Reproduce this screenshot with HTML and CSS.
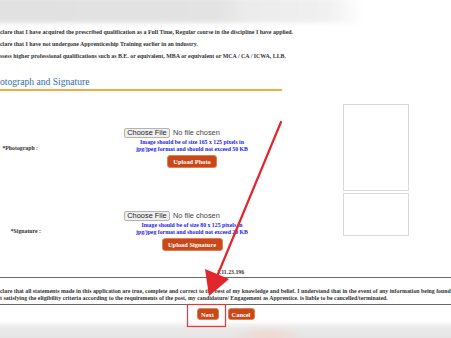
FILE: index.html
```html
<!DOCTYPE html>
<html lang="en">
<head>
  <meta charset="UTF-8">
  <meta name="viewport" content="width=device-width, initial-scale=1.0">
  <title>Apprentice Registration - Photograph and Signature</title>
  <link rel="stylesheet" href="styles.css">
</head>
<body>
  <div class="band band--top"></div>

  <ul class="decl__list">
    <li>clare that I have acquired the prescribed qualification as a Full Time, Regular course in the discipline I have applied.</li>
    <li>clare that I have not undergone Apprenticeship Training earlier in an industry.</li>
    <li>ssess higher professional qualifications such as B.E. or equivalent, MBA or equivalent or MCA / CA / ICWA, LLB.</li>
  </ul>

  <h2 class="section__title">otograph and Signature</h2>

  <div class="upload__wrap">
    <div class="upload__row upload__row--photo">
      <div class="upload__label">*Photograph :</div>
      <div class="upload__field">
        <div class="file">
          <span class="file__btn">Choose File</span>
          <span class="file__name">No file chosen</span>
        </div>
        <p class="upload__hint">Image should be of size 165 x 125 pixels in<br>jpg/jpeg format and should not exceed 50 KB</p>
        <button class="btn">Upload Photo</button>
      </div>
      <div class="preview preview--photo"></div>
    </div>

    <div class="upload__row upload__row--sign">
      <div class="upload__label">*Signature :</div>
      <div class="upload__field">
        <div class="file">
          <span class="file__btn">Choose File</span>
          <span class="file__name">No file chosen</span>
        </div>
        <p class="upload__hint">Image should be of size 80 x 125 pixels in<br>jpg/jpeg format and should not exceed 20 KB</p>
        <button class="btn">Upload Signature</button>
      </div>
      <div class="preview preview--sign"></div>
    </div>
  </div>

  <div class="version">1.11.23.196</div>

  <div class="declare">
    <p>clare that all statements made in this application are true, complete and correct to the best of my knowledge and belief. I understand that in the event of any information being found</p>
    <p>t satisfying the eligibility criteria according to the requirements of the post, my candidature/ Engagement as Apprentice. is liable to be cancelled/terminated.</p>
  </div>

  <div class="actions">
    <button class="btn btn--lg">Next</button>
    <button class="btn btn--lg">Cancel</button>
  </div>

  <div class="band band--bottom"></div>

  <!-- annotation drawn over the screenshot -->
  <svg class="annot" width="451" height="338" viewBox="0 0 451 338">
    <line x1="281" y1="122" x2="218" y2="274" stroke="#e3262b" stroke-width="2.2" stroke-linecap="round"/>
    <polygon points="205,269 229,279 209,296" fill="#e3262b"/>
    <rect x="187.5" y="304.5" width="38" height="22" fill="none" stroke="#e4393c" stroke-width="1.2"/>
  </svg>
</body>
</html>
```

FILE: styles.css
```css
* {
  margin: 0;
  padding: 0;
  box-sizing: border-box;
}

ul,
ol {
  list-style: none;
}

body {
  position: relative;
  width: 451px;
  height: 338px;
  overflow: hidden;
  background: #fff;
  font-family: "Liberation Serif", "Times New Roman", serif;
  color: #333;
}

.band {
  filter: blur(2px);
}

.band--top {
  height: 25px;
  margin: -2px -4px 0;
  background: linear-gradient(to right, #e1e1e1 0, #e3e3e3 48%, #ececec 55%, #f0f0f0 72%, #fff 80%);
}

.band--bottom {
  height: 20px;
  margin: 4px -4px 0;
  background:
    radial-gradient(ellipse 40px 10px at 272px 12px, #f1d6cc 0, rgba(241, 214, 204, 0) 100%),
    linear-gradient(to bottom, #ececec, #e2e2e2);
}

.decl__list {
  margin-top: 3px;
  font-size: 5.9px;
  font-weight: bold;
  line-height: 12px;
  white-space: nowrap;
}

.section__title {
  margin-top: 13px;
  width: 282px;
  border-bottom: 2px solid #f1ac43;
  font-size: 9.6px;
  font-weight: normal;
  line-height: 14px;
  color: #2f6ea4;
}

.upload__wrap {
  margin-top: 13px;
  display: flex;
  flex-direction: column;
  gap: 2px;
}

.upload__row {
  display: grid;
  grid-template-columns: 41px 284px 66px;
  column-gap: 9px;
  align-items: center;
}

.upload__row--photo {
  height: 87px;
}

.upload__row--sign {
  height: 75px;
}

.upload__label {
  text-align: right;
  font-size: 5.8px;
  font-weight: bold;
  white-space: nowrap;
}

.upload__row--photo .upload__label {
  padding-right: 3px;
}

.upload__field {
  display: flex;
  flex-direction: column;
  align-items: center;
}

.file {
  display: flex;
  align-items: center;
  width: 136px;
  height: 10px;
  font-family: "Liberation Sans", Arial, sans-serif;
  font-size: 7.4px;
}

.file__btn {
  display: block;
  width: 46px;
  height: 10px;
  line-height: 8px;
  text-align: center;
  color: #222;
  background: #efefef;
  border: 1px solid #b4b4b4;
  border-radius: 2px;
}

.file__name {
  margin-left: 3px;
  color: #444;
}

.upload__hint {
  margin-top: 1px;
  font-size: 5.8px;
  font-weight: bold;
  line-height: 7px;
  text-align: center;
  color: #1c1ce0;
}

.btn {
  margin-top: 2px;
  padding: 0;
  height: 13px;
  font-family: "Liberation Serif", "Times New Roman", serif;
  font-size: 6.4px;
  font-weight: bold;
  color: #fff;
  background: #c8481b;
  border: 1px solid #e0814f;
  border-radius: 3px;
}

.upload__row--photo .btn {
  width: 50px;
}

.upload__row--sign .btn {
  width: 61px;
}

.preview {
  width: 66px;
  border: 1px solid #d9d9d9;
}

.preview--photo {
  height: 87px;
}

.preview--sign {
  align-self: start;
  height: 43px;
}

.version {
  padding-left: 10px;
  text-align: center;
  font-size: 5.8px;
  font-weight: bold;
  line-height: 9px;
}

.declare {
  padding: 10px 0 2px;
  border-top: 1.5px solid #6a6a6a;
  border-bottom: 1.5px solid #6a6a6a;
  font-size: 5.85px;
  font-weight: bold;
  line-height: 7px;
  white-space: nowrap;
  overflow: hidden;
}

.actions {
  margin-top: 3px;
  display: flex;
  justify-content: center;
  gap: 9px;
}

.btn--lg {
  margin-top: 0;
  height: 12px;
}

.actions .btn--lg:first-child {
  width: 22px;
}

.actions .btn--lg:last-child {
  width: 27px;
}

.annot {
  position: absolute;
  top: 0;
  left: 0;
  pointer-events: none;
}
```
